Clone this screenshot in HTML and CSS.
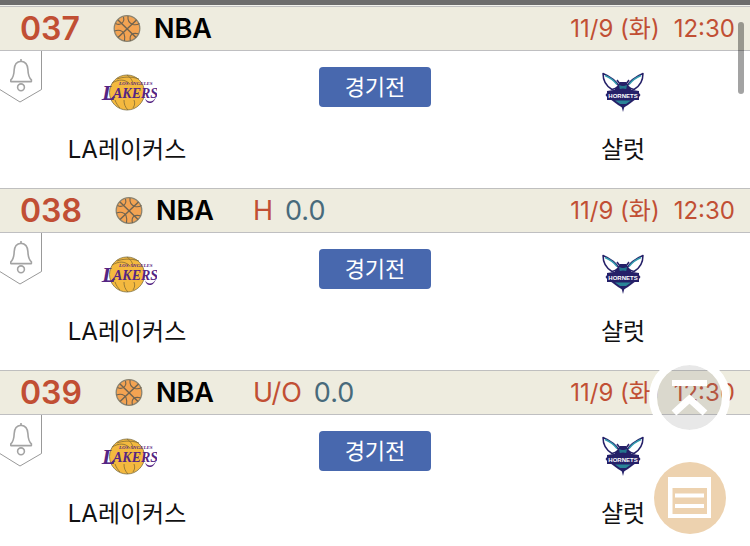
FILE: index.html
```html
<!DOCTYPE html>
<html lang="ko">
<head>
    <meta charset="UTF-8">
    <meta name="viewport" content="width=device-width, initial-scale=1.0">
    <title>NBA</title>
    <link rel="stylesheet" href="styles.css">
</head>
<body>
    <!-- shared icons -->
    <svg class="sprite" aria-hidden="true">
        <symbol id="ball" viewBox="0 0 28 28">
            <circle cx="14" cy="13.500" r="12.800" fill="#f3a352" stroke="#8a8370" stroke-width="1.300"/>
            <g fill="none" stroke="#6f6350" stroke-width="1.100">
                <path d="M5 5 23 22.500M23.500 5 5 22.500" stroke-width="1.400"/>
                <path d="M15 1c-.5 4.500 1.500 7.500 5 8.500 2.500.6 4.500.2 6.500-1M1.500 16c4-1.500 8-.5 9.500 2.500 1 2.500.8 5 .5 7.500"/>
                <path d="M2.500 8.500c3 1.500 6 .8 7.500-1.500 1-1.600 1-3.500.5-5M17.500 26c-.8-3-.3-5.500 1.500-6.800 1.800-1.200 4.200-1 6.500-.4"/>
            </g>
        </symbol>
        <symbol id="bell" viewBox="0 0 43 53">
            <path d="M41.500-1V38.500L20 51-1 38" fill="#fff" stroke="#999" stroke-width="1"/>
            <g fill="none" stroke="#a3a3a3" stroke-width="1.600">
                <path d="M21 10.200c-4.800.4-6.600 4-6.800 8.300-.2 5.500-1.200 8.500-3.400 10.300v1.800h20.600v-1.800c-2.200-1.800-3.300-4.800-3.500-10.300-.2-4.300-2.100-7.900-6.900-8.300z" stroke-linejoin="round"/>
                <circle cx="21" cy="36.300" r="3.400"/>
                <path d="M21 8v2"/>
            </g>
        </symbol>
    </svg>

    <div class="top-line"></div>

    <main class="match-list">
        <section class="match">
            <header class="match-header">
                <span class="match-no">037</span>
                <svg class="ball"><use href="#ball"/></svg>
                <span class="league">NBA</span>
                <time class="match-time"><span>11/9 (화)</span><span>12:30</span></time>
            </header>
            <div class="match-body">
                <button type="button" class="alarm" aria-label="알림"><svg><use href="#bell"/></svg></button>
                <div class="team">
                    <!-- team logos are drawn once here and reused below -->
                    <svg class="logo" viewBox="0 0 60 48">
                        <g id="lakers">
                            <circle cx="30" cy="25.500" r="17.500" fill="#f4b93f" stroke="#7b7048" stroke-width=".8"/>
                            <g fill="none" stroke="#826b35" stroke-width=".8">
                                <path d="M15 16c7-4 13-4 18 1M30 8c4 3 6 6 6 10M20 12c5-2 14-3 22 0M18 33c1 3 3 6 5 8M27 33c0 4 1 7 4 10M37 33c1 3 1 5-1 8"/>
                            </g>
                            <g class="lakers-text">
                                <text x="5" y="33" font-size="22">L</text>
                                <text x="16" y="31" font-size="14">AKERS</text>
                                <text x="22" y="18" font-size="5">LOS ANGELES</text>
                            </g>
                            <path d="M4 33l3-1.500h7l3-3-1 4.500zM48 31.500c3 4.500 8 4 11-1.500-2 7-9 8.500-11 1.500z" fill="#552583"/>
                        </g>
                    </svg>
                    <span class="team-name">LA레이커스</span>
                </div>
                <button type="button" class="status">경기전</button>
                <div class="team">
                    <svg class="logo" viewBox="0 0 60 48">
                        <g id="hornets">
                            <g stroke="#252068" stroke-width="1.500" stroke-linejoin="round">
                                <path d="M27 20C23 14 16 9 10 6.500c0 7 3 12.500 9 16z" fill="#fff"/>
                                <path d="M33 20C37 14 44 9 50 6.500c0 7-3 12.500-9 16z" fill="#fff"/>
                                <path d="M27 17l-3-4M33 17l3-4" fill="none"/>
                            </g>
                            <path d="M12 8.500c5 2 9 5 12 9M48 8.500c-5 2-9 5-12 9" fill="none" stroke="#329aad" stroke-width="1.400"/>
                            <path d="M25 18l2-3h6l2 3 3 3v13l-6 4h-4l-6-4V21z" fill="#252068"/>
                            <path d="M26 18l3 1h2l3-1-1 5h-6z" fill="#23758d"/>
                            <path d="M17 32h26l-8 6-5 3-5-3z" fill="#252068"/>
                            <path d="M22 33.500h16l-5 3.500h-6z" fill="#2a8498"/>
                            <path d="M28 37h4L30 45z" fill="#252068"/>
                            <path d="M14 24l16-2.500L46 24v2l1.500 2L46 30v3H14v-3l-1.500-2L14 26z" fill="#252068"/>
                            <text class="hornets-text" x="30" y="31" font-size="6">HORNETS</text>
                        </g>
                    </svg>
                    <span class="team-name">샬럿</span>
                </div>
            </div>
        </section>

        <section class="match">
            <header class="match-header">
                <span class="match-no">038</span>
                <svg class="ball"><use href="#ball"/></svg>
                <span class="league">NBA</span>
                <span class="odds"><span class="odds-type">H</span><span>0.0</span></span>
                <time class="match-time"><span>11/9 (화)</span><span>12:30</span></time>
            </header>
            <div class="match-body">
                <button type="button" class="alarm" aria-label="알림"><svg><use href="#bell"/></svg></button>
                <div class="team">
                    <svg class="logo" viewBox="0 0 60 48"><use href="#lakers"/></svg>
                    <span class="team-name">LA레이커스</span>
                </div>
                <button type="button" class="status">경기전</button>
                <div class="team">
                    <svg class="logo" viewBox="0 0 60 48"><use href="#hornets"/></svg>
                    <span class="team-name">샬럿</span>
                </div>
            </div>
        </section>

        <section class="match">
            <header class="match-header">
                <span class="match-no">039</span>
                <svg class="ball"><use href="#ball"/></svg>
                <span class="league">NBA</span>
                <span class="odds"><span class="odds-type">U/O</span><span>0.0</span></span>
                <time class="match-time"><span>11/9 (화)</span><span>12:30</span></time>
            </header>
            <div class="match-body">
                <button type="button" class="alarm" aria-label="알림"><svg><use href="#bell"/></svg></button>
                <div class="team">
                    <svg class="logo" viewBox="0 0 60 48"><use href="#lakers"/></svg>
                    <span class="team-name">LA레이커스</span>
                </div>
                <button type="button" class="status">경기전</button>
                <div class="team">
                    <svg class="logo" viewBox="0 0 60 48"><use href="#hornets"/></svg>
                    <span class="team-name">샬럿</span>
                </div>
            </div>
        </section>
    </main>

    <div class="scroll-thumb"></div>

    <div class="floating">
        <a class="go-top" href="#" aria-label="맨 위로">
            <svg viewBox="0 0 81 81">
                <path d="M23 26h35" stroke="#fff" stroke-width="6"/>
                <path d="M25 56 40.500 42 56 56" fill="none" stroke="#fff" stroke-width="7"/>
            </svg>
        </a>
        <button type="button" class="slip" aria-label="목록">
            <svg viewBox="0 0 72 72">
                <path d="M14 15h43v41H14zM18.500 26v26H53V26z" fill="#fff" fill-rule="evenodd"/>
                <path d="M21 33.500h29M21 44h29" stroke="#fff" stroke-width="4"/>
            </svg>
        </button>
    </div>
</body>
</html>
```
FILE: styles.css
```css
* {
    margin: 0;
    padding: 0;
    box-sizing: border-box;
}

html {
    scrollbar-width: none;
}

body {
    background: #fff;
    color: #111;
    font-family: Inter, 'Noto Sans CJK KR', sans-serif;
    font-size: 24px;
}

button {
    border: none;
    background: none;
    font: inherit;
    cursor: pointer;
}

svg {
    display: block;
}

.sprite {
    position: absolute;
    width: 0;
    height: 0;
}

.top-line {
    height: 6px;
    background: #6d6d6d;
    border-bottom: 1px solid #f3f3ee;
}

/* match header */
.match-header {
    display: flex;
    align-items: center;
    height: 45px;
    padding: 0 15px 0 20px;
    background: #eeecdf;
    border-top: 1px solid #bfbfbf;
    border-bottom: 1px solid #bfbfc1;
    line-height: 32px;
}

.match-no {
    color: #c14f34;
    font-size: 32px;
    font-weight: 600;
}

.ball {
    width: 28px;
    height: 28px;
    margin-left: 33px;
}

.league {
    margin-left: 13px;
    color: #000;
    font-size: 27px;
    font-weight: 600;
}

.odds {
    display: flex;
    gap: 12px;
    margin-left: 39px;
    color: #486a7b;
    font-size: 27px;
}

.odds-type,
.match-time {
    color: #c14f34;
}

.match-time {
    display: flex;
    gap: 14px;
    margin-left: auto;
}

/* match body */
.match-body {
    position: relative;
    display: grid;
    grid-template-columns: repeat(3, 1fr);
    justify-items: center;
    align-items: start;
    padding: 16px 3px 22px;
}

.alarm {
    position: absolute;
    top: 0;
    left: 0;
}

.alarm svg {
    width: 43px;
    height: 53px;
}

.team {
    display: flex;
    flex-direction: column;
    align-items: center;
    gap: 19px;
}

.logo {
    width: 60px;
    height: 48px;
}

.team-name {
    line-height: 32px;
}

.lakers-text {
    fill: #552583;
    font-family: 'Liberation Serif', serif;
    font-style: italic;
    font-weight: 700;
}

.hornets-text {
    fill: #fff;
    font-family: 'Liberation Sans', sans-serif;
    font-weight: 700;
    text-anchor: middle;
}

.status {
    width: 112px;
    height: 40px;
    padding-bottom: 4px;
    border-radius: 4px;
    background: #4868ae;
    color: #fff;
    font-size: 22px;
}

/* overlays */
.scroll-thumb {
    position: fixed;
    top: 22px;
    right: 6px;
    width: 6px;
    height: 72px;
    border-radius: 3px;
    background: rgba(0, 0, 0, 0.36);
}

.floating {
    position: fixed;
    right: 20px;
    bottom: 12px;
    display: flex;
    flex-direction: column;
    align-items: center;
    gap: 24px;
}

.go-top {
    width: 81px;
    height: 81px;
    border: 8px solid #fff;
    border-radius: 50%;
    background: rgba(130, 130, 130, 0.18);
    background-clip: padding-box;
}

.go-top svg {
    width: 81px;
    height: 81px;
    margin: -8px;
}

.slip {
    width: 72px;
    height: 72px;
    border-radius: 50%;
    background: #edd2af;
}
```
